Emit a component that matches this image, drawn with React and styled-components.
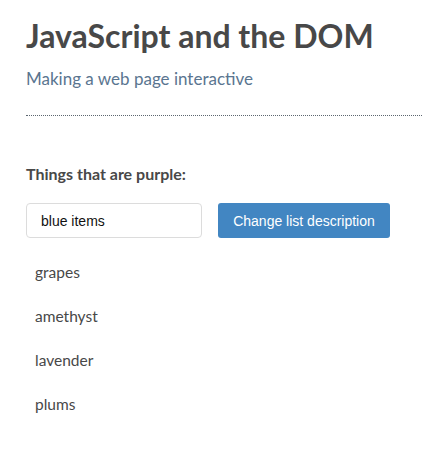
import styled, { createGlobalStyle } from 'styled-components';

const GlobalStyle = createGlobalStyle`
  body {
    margin: 0;
    background: #fff;
    font-family: Lato, "Open Sans", sans-serif;
    color: #484848;
  }
`;

const Page = styled.div`
  padding: 16px 0 0 26px;
`;

const Title = styled.h1`
  font-size: 32px;
  font-weight: 700;
  margin: 0;
  line-height: 40px;
  color: #484848;
`;

const Subtitle = styled.p`
  font-size: 17px;
  color: #5a7590;
  margin: 11px 0 0;
  line-height: 24px;
`;

const Divider = styled.hr`
  border: 0;
  border-top: 1px dotted #5c6670;
  margin: 24px 0 0;
  height: 0;
`;

const Label = styled.p`
  font-size: 16px;
  font-weight: 700;
  color: #484848;
  margin: 48px 0 0;
  line-height: 20px;
`;

const Form = styled.div`
  display: flex;
  gap: 16px;
  margin-top: 19px;
`;

const Input = styled.input`
  box-sizing: border-box;
  width: 176px;
  height: 35px;
  border: 1px solid #dcdcdc;
  border-radius: 4px;
  padding: 0 14px;
  font-family: "Liberation Sans", Arial, sans-serif;
  font-size: 14px;
  color: #111;
  outline: none;
`;

const Button = styled.button`
  box-sizing: border-box;
  width: 172px;
  height: 35px;
  border: 0;
  border-radius: 3px;
  background: #4286c2;
  color: #fff;
  font-family: "Liberation Sans", Arial, sans-serif;
  font-size: 14px;
  cursor: pointer;
`;

const List = styled.ul`
  list-style: none;
  margin: 24px 0 0;
  padding: 0 0 0 9px;
`;

const Item = styled.li`
  font-size: 15.5px;
  line-height: 20px;
  color: #484848;
  margin-bottom: 24px;
`;

const items = ['grapes', 'amethyst', 'lavender', 'plums'];

export default function App() {
  return (
    <Page>
      <GlobalStyle />
      <Title>JavaScript and the DOM</Title>
      <Subtitle>Making a web page interactive</Subtitle>
      <Divider />
      <Label>Things that are purple:</Label>
      <Form>
        <Input defaultValue="blue items" />
        <Button>Change list description</Button>
      </Form>
      <List>
        {items.map((item) => (
          <Item key={item}>{item}</Item>
        ))}
      </List>
    </Page>
  );
}
